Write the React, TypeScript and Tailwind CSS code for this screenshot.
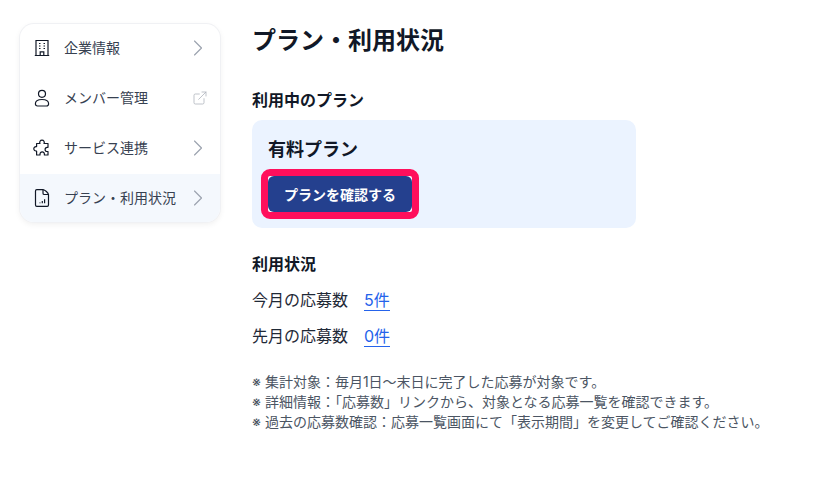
import { ChevronRight, ExternalLink } from "lucide-react";
import type { ReactNode } from "react";

const font = "font-['Inter','Noto_Sans_CJK_JP',sans-serif]";

function BuildingIcon() {
  return (
    <svg width="20" height="20" viewBox="0 0 20 20" fill="none" stroke="#111827" strokeWidth="1.2">
      <path d="M4 18V2.500h12V18" />
      <path d="M2.800 17.500h14.400" />
      <path d="M8.200 17.500v-3.700h3.600v3.700" />
      <path d="M7 5.500h1.500M11.500 5.500H13M7 8h1.500M11.500 8H13M7 10.500h1.500M11.500 10.500H13" />
    </svg>
  );
}

function PersonIcon() {
  return (
    <svg width="20" height="20" viewBox="0 0 20 20" fill="none" stroke="#111827" strokeWidth="1.2">
      <circle cx="10" cy="5.800" r="3.500" />
      <path d="M3.400 15.800c0-2.600 2.500-4.300 6.600-4.300s6.600 1.700 6.600 4.300c0 1.400-.8 2.200-2.100 2.200h-9c-1.300 0-2.100-.8-2.100-2.200z" />
    </svg>
  );
}

function PuzzleIcon() {
  return (
    <svg width="20" height="20" viewBox="0 0 20 20" fill="none" stroke="#111827" strokeWidth="1.2" strokeLinejoin="round">
      <path d="M4.600 5.500H8a2.300 2.300 0 1 1 4 0h4v3.800h-.8a2.100 2.100 0 1 0 0 4.200h.8v3.500h-3.600v-.9a2.200 2.200 0 1 0-4.400 0v.9H4.600v-4H4a2.200 2.200 0 1 1 0-4.400h.6z" />
    </svg>
  );
}

function ReportIcon() {
  return (
    <svg width="20" height="20" viewBox="0 0 20 20" fill="none" stroke="#111827" strokeWidth="1.2">
      <path d="M3.500 3c0-.8.5-1.300 1.300-1.300H11c2 .3 5.200 3 5.500 5V17c0 .8-.5 1.300-1.300 1.300H4.800c-.8 0-1.300-.5-1.300-1.300z" />
      <path d="M11 1.700v3.500c0 .8.500 1.300 1.300 1.300h4.200" />
      <path d="M8 15.200v-.8M10.300 15.200v-2.300M12.600 15.200v-4" />
    </svg>
  );
}

function NavRow({
  icon,
  label,
  active,
  external,
}: {
  icon: ReactNode;
  label: string;
  active?: boolean;
  external?: boolean;
}) {
  return (
    <div className={`flex h-[48px] items-center px-[12px] ${active ? "bg-[#f4f8fd]" : ""}`}>
      <span className="flex w-[20px] justify-center">{icon}</span>
      <span className="mb-[2px] ml-[12px] flex-1 text-[14px] text-[#374151]">{label}</span>
      {external ? (
        <ExternalLink size={16} strokeWidth={1.2} className="text-[#aeb4bd]" />
      ) : (
        <ChevronRight size={28} strokeWidth={1} className="mr-[-4px] text-[#9ca3af]" />
      )}
    </div>
  );
}

function UsageRow({ label, value }: { label: string; value: string }) {
  return (
    <div className="flex h-[36px] items-center text-[16px] text-[#1f2937]">
      <span className="w-[112px]">{label}</span>
      <span className="border-b border-[#2563eb] leading-[20px] text-[#2563eb]">{value}</span>
    </div>
  );
}

export default function App() {
  return (
    <div className={`${font} flex h-[499px] w-[819px] items-start bg-white`}>
      <nav className="ml-[20px] mt-[24px] flex w-[200px] flex-col gap-[2px] overflow-hidden rounded-[14px] bg-white shadow-[0_0_0_1px_#f0f1f4,0_2px_6px_rgba(0,0,0,0.07)]">
        <NavRow icon={<BuildingIcon />} label="企業情報" />
        <NavRow icon={<PersonIcon />} label="メンバー管理" external />
        <NavRow icon={<PuzzleIcon />} label="サービス連携" />
        <NavRow icon={<ReportIcon />} label="プラン・利用状況" active />
      </nav>
      <main className="ml-[32px] w-[530px] pt-[23px]">
        <h1 className="text-[24px] leading-[36px] font-semibold text-[#111827]">プラン・利用状況</h1>
        <h2 className="mt-[29px] text-[16px] leading-[24px] font-semibold text-[#111827]">利用中のプラン</h2>
        <section className="mt-[8px] h-[108px] w-[384px] rounded-[10px] bg-[#ebf3ff] px-[16px] pt-[17px]">
          <div className="text-[18px] leading-[26px] font-semibold text-[#111827]">有料プラン</div>
          <div className="mt-[13px] w-[144px] rounded-[2px] bg-white outline-[7px] outline-[#ff0f5c]">
            <button
              type="button"
              className="flex h-[36px] w-full items-center justify-center rounded-[6px] bg-[#24408e] text-[14px] font-bold text-white"
            >
              プランを確認する
            </button>
          </div>
        </section>
        <h2 className="mt-[24px] text-[16px] leading-[24px] font-semibold text-[#111827]">利用状況</h2>
        <div className="mt-[6px]">
          <UsageRow label="今月の応募数" value="5件" />
          <UsageRow label="先月の応募数" value="0件" />
        </div>
        <ul className="mt-[18px] text-[14px] leading-[20px] text-[#4b5563]">
          <li>※ 集計対象：毎月1日〜末日に完了した応募が対象です。</li>
          <li>※ 詳細情報：「応募数」リンクから、対象となる応募一覧を確認できます。</li>
          <li>※ 過去の応募数確認：応募一覧画面にて「表示期間」を変更してご確認ください。</li>
        </ul>
      </main>
    </div>
  );
}
